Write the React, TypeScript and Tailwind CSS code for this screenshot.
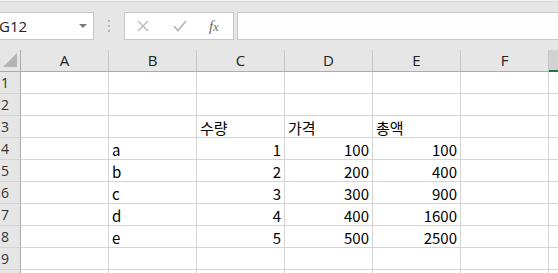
import React from 'react'

const cols = ['A', 'B', 'C', 'D', 'E', 'F']

type Cell = { text: string; align?: 'left' | 'right' }

const rows: Record<number, Record<string, Cell>> = {
  3: { C: { text: '수량' }, D: { text: '가격' }, E: { text: '총액' } },
  4: { B: { text: 'a' }, C: { text: '1', align: 'right' }, D: { text: '100', align: 'right' }, E: { text: '100', align: 'right' } },
  5: { B: { text: 'b' }, C: { text: '2', align: 'right' }, D: { text: '200', align: 'right' }, E: { text: '400', align: 'right' } },
  6: { B: { text: 'c' }, C: { text: '3', align: 'right' }, D: { text: '300', align: 'right' }, E: { text: '900', align: 'right' } },
  7: { B: { text: 'd' }, C: { text: '4', align: 'right' }, D: { text: '400', align: 'right' }, E: { text: '1600', align: 'right' } },
  8: { B: { text: 'e' }, C: { text: '5', align: 'right' }, D: { text: '500', align: 'right' }, E: { text: '2500', align: 'right' } },
}

const uiFont = "font-['Open_Sans','Noto_Sans',sans-serif]"
const cellFont = "font-['Noto_Sans_CJK_KR','Noto_Sans',sans-serif]"

function Toolbar() {
  return (
    <div className="h-[50px] shrink-0 bg-[#e6e6e6] flex flex-col">
      <div className="h-[1px] bg-[#f3f3f3]" />
      <div className="h-[1px] bg-[#d5d5d5]" />
      <div className="flex items-start pt-[10px]">
        {/* name box */}
        <div className="w-[94px] h-[28px] bg-white border border-l-0 border-[#c6c6c6] flex items-center justify-between pr-[6px]">
          <span className={`${uiFont} text-[15px] text-[#222] leading-none -ml-[1px]`}>G12</span>
          <div className="w-0 h-0 border-l-[4px] border-r-[4px] border-t-[4px] border-l-transparent border-r-transparent border-t-[#7a7a7a]" />
        </div>
        {/* separator dots */}
        <div className="w-[30px] h-[28px] flex flex-col items-center justify-center gap-[3px]">
          <div className="w-[2px] h-[2px] bg-[#b5b5b5]" />
          <div className="w-[2px] h-[2px] bg-[#b5b5b5]" />
          <div className="w-[2px] h-[2px] bg-[#b5b5b5]" />
        </div>
        {/* formula buttons */}
        <div className="w-[110px] h-[28px] bg-white border border-[#c6c6c6] flex items-center">
          <svg className="ml-[12px]" width="12" height="12" viewBox="0 0 12 12">
            <path d="M1 1 L11 11 M11 1 L1 11" stroke="#b9b9b9" strokeWidth="1.4" fill="none" />
          </svg>
          <svg className="ml-[24px]" width="14" height="12" viewBox="0 0 14 12">
            <path d="M1 6 L5 10.5 L13 1" stroke="#b9b9b9" strokeWidth="1.8" fill="none" />
          </svg>
          <span className="ml-[22px] font-['Liberation_Serif',serif] italic text-[15px] text-[#6a6a6a] leading-none">
            f<span className="text-[12px]">x</span>
          </span>
        </div>
        {/* formula input */}
        <div className="ml-[3px] flex-1 h-[28px] bg-[#fdfdfd] border border-r-0 border-[#c6c6c6]" />
      </div>
    </div>
  )
}

function HeaderRow() {
  return (
    <div className="flex h-[22px] shrink-0 border-b border-[#ababab] bg-[#e6e6e6]">
      <div className="w-[21px] shrink-0 border-r border-[#ababab] relative">
        <svg className="absolute left-[3px] top-[3px]" width="14" height="14" viewBox="0 0 14 14">
          <path d="M14 0 L14 14 L0 14 Z" fill="#b4b4b4" />
        </svg>
      </div>
      {cols.map((c) => (
        <div
          key={c}
          className={`w-[88px] shrink-0 border-r border-[#c6c6c6] flex items-center justify-center ${uiFont} text-[15px] text-[#222] leading-none`}
        >
          {c}
        </div>
      ))}
      <div className="flex-1 bg-[#d2d2d2] border-b-2 border-[#217346] -mb-[1px]" />
    </div>
  )
}

function Row({ n, label = true }: { n: number; label?: boolean }) {
  const data = rows[n] || {}
  return (
    <div className="flex h-[22px] shrink-0">
      <div className={`w-[21px] shrink-0 border-r border-b border-r-[#ababab] border-b-[#d4d4d4] bg-[#e6e6e6] flex items-end pl-[1px] pb-[2px] ${uiFont} text-[14px] text-[#333] leading-[16px]`}>
        {label ? n : null}
      </div>
      {cols.map((c) => {
        const cell = data[c]
        return (
          <div
            key={c}
            className={`w-[88px] shrink-0 border-r border-b border-[#d4d4d4] bg-white flex items-end pb-[1px] px-[3px] ${cellFont} text-[15px] text-black leading-[16px] ${cell?.align === 'right' ? 'justify-end' : 'justify-start'}`}
          >
            {cell?.text}
          </div>
        )
      })}
      <div className="flex-1 border-b border-[#d4d4d4] bg-white" />
    </div>
  )
}

export default function App() {
  return (
    <div className="w-[558px] h-[273px] overflow-hidden bg-white flex flex-col">
      <Toolbar />
      <HeaderRow />
      {[1, 2, 3, 4, 5, 6, 7, 8, 9].map((n) => (
        <Row key={n} n={n} />
      ))}
      {/* row 10 is only a sliver at the bottom edge, label not visible */}
      <Row n={10} label={false} />
    </div>
  )
}
